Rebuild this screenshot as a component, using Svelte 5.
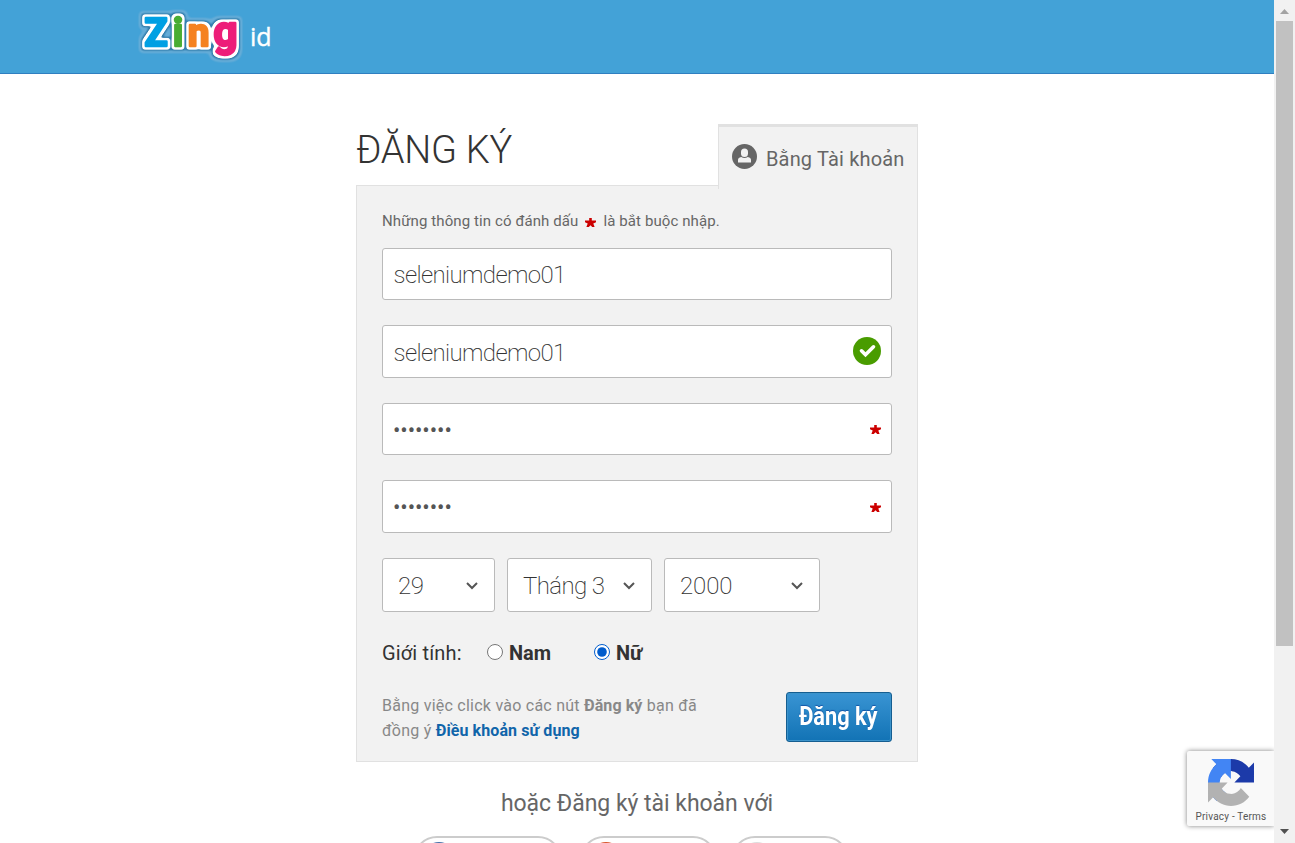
<script>
  let username = $state('seleniumdemo01');
  let gender = $state('nu');
  const dates = [
    { label: '29', width: 113, spacing: -0.4 },
    { label: 'Tháng 3', width: 145, spacing: -0.6 },
    { label: '2000', width: 156, spacing: -0.1 }
  ];
</script>

{#snippet star()}
  <svg class="star" width="11" height="9" viewBox="0 0 11 9"><path d="M4.200 0h2.600v2.400H11v1.800L8.300 5.600 9.600 9H7.200L5.500 7.200 3.800 9H1.400L2.700 5.600 0 4.200V2.400h4.200z" fill="#c00" /></svg>
{/snippet}

<div class="window">
  <div class="page">
    <header>
      <svg class="logo" width="150" height="73" viewBox="0 0 150 73">
        <defs>
          <filter id="halo" filterUnits="userSpaceOnUse" x="0" y="0" width="150" height="73" color-interpolation-filters="sRGB">
            <feMorphology in="SourceAlpha" operator="dilate" radius="5" result="far" />
            <feGaussianBlur in="far" stdDeviation="2" result="farSoft" />
            <feComponentTransfer in="farSoft" result="farEdge"><feFuncA type="linear" slope="3" intercept="-.5" /></feComponentTransfer>
            <feFlood flood-color="#64acd7" />
            <feComposite in2="farEdge" operator="in" result="light" />
            <feMorphology in="SourceAlpha" operator="dilate" radius="3" result="mid" />
            <feGaussianBlur in="mid" stdDeviation="1.8" result="midSoft" />
            <feComponentTransfer in="midSoft" result="midEdge"><feFuncA type="linear" slope="2.2" intercept="-.3" /></feComponentTransfer>
            <feFlood flood-color="#347fae" />
            <feComposite in2="midEdge" operator="in" result="dark" />
            <feMorphology in="SourceAlpha" operator="dilate" radius="2" result="near" />
            <feGaussianBlur in="near" stdDeviation="1.2" result="nearSoft" />
            <feComponentTransfer in="nearSoft" result="nearEdge"><feFuncA type="linear" slope="4" intercept="-1" /></feComponentTransfer>
            <feFlood flood-color="#fff" />
            <feComposite in2="nearEdge" operator="in" result="white" />
            <feMerge>
              <feMergeNode in="light" />
              <feMergeNode in="dark" />
              <feMergeNode in="white" />
              <feMergeNode in="SourceGraphic" />
            </feMerge>
          </filter>
        </defs>
        <g class="zing" filter="url(#halo)">
          <text y="46"><tspan x="12.500" fill="#00a0e3" stroke="#00a0e3">Z</tspan><tspan x="41" fill="#49ad33" stroke="#49ad33">i</tspan><tspan x="56" fill="#f58220" stroke="#f58220">n</tspan><tspan class="g" x="81.500" fill="#ed1e79" stroke="#ed1e79">g</tspan></text>
        </g>
        <text class="id" x="118" y="46">id</text>
      </svg>
    </header>

    <main>
      <div class="top">
        <h1>ĐĂNG KÝ</h1>
        <div class="tab">
          <svg width="25" height="25" viewBox="0 0 25 25"><circle cx="12.500" cy="12.500" r="12.500" fill="#666" /><rect x="9" y="4.500" width="7" height="8.600" rx="3.500" fill="#f2f2f2" /><path d="M6 18.500v-2.700q0-2.200 3.200-2.900 3.300 2.300 6.600 0 3.200.7 3.200 2.900v2.700z" fill="#f2f2f2" /></svg>
          <span>Bằng Tài khoản</span>
        </div>
      </div>
      <form class="panel">
        <p class="note"><span>Những thông tin có đánh dấu</span>{@render star()}<span>là bắt buộc nhập.</span></p>
        <div class="field"><input bind:value={username} /></div>
        <div class="field">
          <input bind:value={username} />
          <svg class="ok" width="28" height="28" viewBox="0 0 28 28"><circle cx="14" cy="14" r="14" fill="#499c00" /><path d="m8.500 13.800 4 4 8-8" fill="none" stroke="#fff" stroke-width="3.600" stroke-linecap="round" /></svg>
        </div>
        <div class="field"><span class="dots">••••••••</span>{@render star()}</div>
        <div class="field"><span class="dots">••••••••</span>{@render star()}</div>
        <div class="dates">
          {#each dates as date}
            <div class="select" style:width="{date.width}px">
              <span style:letter-spacing="{date.spacing}px">{date.label}</span>
              <svg width="12" height="8" viewBox="0 0 12 8"><path d="m1 1 5 5 5-5" fill="none" stroke="#555" stroke-width="2" /></svg>
            </div>
          {/each}
        </div>
        <div class="gender">
          <span class="caption">Giới tính:</span>
          <label class="first"><input type="radio" value="nam" bind:group={gender} /><b>Nam</b></label>
          <label><input type="radio" value="nu" bind:group={gender} /><b>Nữ</b></label>
        </div>
        <div class="submit">
          <p>Bằng việc click vào các nút <b>Đăng ký</b> bạn đã<br />đồng ý <b class="link">Điều khoản sử dụng</b></p>
          <button type="button"><span>Đăng ký</span></button>
        </div>
      </form>
      <p class="or">hoặc Đăng ký tài khoản với</p>
      <div class="socials">
        <div class="pill" style:width="149px"><i style:background="#4470aa"></i></div>
        <div class="pill" style:width="137px"><i style:background="#d9562b"></i></div>
        <div class="pill" style:width="118px"><i style:background="#ddd"></i></div>
      </div>
    </main>

    <aside class="captcha">
      <svg width="46" height="47" viewBox="0 0 64 64" preserveAspectRatio="none">
        <path d="M64 31.955l-.033-1.370V4.687l-7.160 7.160C50.948 4.674 42.033.093 32.050.093c-10.400 0-19.622 4.960-25.458 12.640l11.736 11.860a15.550 15.550 0 0 1 4.754-5.334c2.050-1.600 4.952-2.906 8.968-2.906.485 0 .86.057 1.135.163 4.976.393 9.288 3.140 11.828 7.124l-8.307 8.307L64 31.953" fill="#1c3aa9" />
        <path d="M31.862.094l-1.370.033H4.594l7.160 7.160C4.580 13.147 0 22.060 0 32.046c0 10.400 4.960 19.622 12.640 25.458L24.500 45.768a15.550 15.550 0 0 1-5.334-4.754c-1.600-2.050-2.906-4.952-2.906-8.968 0-.485.057-.86.163-1.135.393-4.976 3.140-9.288 7.124-11.828l8.307 8.307L31.860.095" fill="#4285f4" />
        <path d="M.001 32.045l.033 1.370v25.898l7.160-7.160c5.860 7.173 14.774 11.754 24.760 11.754 10.400 0 19.622-4.960 25.458-12.640l-11.736-11.860a15.550 15.550 0 0 1-4.754 5.334c-2.050 1.600-4.952 2.906-8.968 2.906-.485 0-.86-.057-1.135-.163-4.976-.393-9.288-3.140-11.828-7.124l8.307-8.307L.001 32.045" fill="#b2b2b2" />
      </svg>
      <span>Privacy - Terms</span>
    </aside>
  </div>

  <div class="scrollbar">
    <svg width="9" height="5" viewBox="0 0 9 5"><path d="M0 5 4.500 0 9 5z" fill="#a3a3a3" /></svg>
    <div class="thumb"></div>
    <svg class="down" width="9" height="5" viewBox="0 0 9 5"><path d="M0 0h9L4.500 5z" fill="#505050" /></svg>
  </div>
</div>

<style>
  :global(body) { margin: 0; overflow: hidden; }
  .window { display: flex; width: 1295px; height: 843px; overflow: hidden; font-family: Roboto, sans-serif; color: #666; background: #fff; }
  .window * { box-sizing: border-box; }
  .page { position: relative; width: 1274px; height: 843px; overflow: hidden; }
  p, h1 { margin: 0; }
  header { height: 74px; padding-left: 132px; background: #43a2d7; border-bottom: 1px solid #2f7fc0; }
  .logo { display: block; overflow: visible; }
  .zing { font: 700 38px Roboto, sans-serif; stroke-width: 2.500px; stroke-linejoin: round; }
  .zing .g { font-size: 42px; }
  .id { font: 400 25px "Open Sans", sans-serif; fill: #fff; stroke: #fff; stroke-width: .4px; }
  main { width: 562px; margin-left: 356px; padding-top: 50px; }
  .top { display: flex; justify-content: space-between; height: 61px; }
  h1 { font-size: 38px; line-height: 53px; font-weight: 300; letter-spacing: -.25px; color: #333; }
  .tab { display: flex; align-items: center; gap: 9px; width: 200px; height: 65px; padding: 0 0 0 13px; background: #f2f2f2; border: 1px solid #e1e1e1; border-top-width: 3px; border-bottom: 0; font-size: 20px; line-height: 28px; z-index: 1; }
  .tab svg { margin-bottom: 3px; }
  .tab span { margin-top: 2px; white-space: nowrap; letter-spacing: .16px; }
  .panel { height: 577px; padding: 25px 25px 0; background: #f2f2f2; border: 1px solid #e1e1e1; }
  .note { display: flex; align-items: center; height: 20px; margin-bottom: 16.900px; font-size: 15px; line-height: 20px; letter-spacing: .1px; }
  .note .star { margin: 3px 7px 0; }
  .field { display: flex; align-items: center; justify-content: space-between; width: 510px; height: 52.500px; margin-bottom: 25px; padding: 0 10px; background: #fff; border: 1px solid #bababa; border-radius: 3px; }
  .field .ok { margin-bottom: 1px; }
  .field .star { margin-top: 1px; }
  .field input { width: 400px; height: 40px; margin-top: 2px; padding: 0 0 0 .5px; border: 0; outline: 0; background: none; font: 200 24px Roboto, sans-serif; letter-spacing: -.64px; color: #333; }
  .dots { margin-top: 2px; font-size: 22px; letter-spacing: -.08px; color: #555; }
  .dates { display: flex; gap: 12px; }
  .select { display: flex; align-items: center; justify-content: space-between; height: 54px; padding: 0 16px 0 15px; background: #fff; border: 1px solid #bababa; border-radius: 3px; font-size: 24px; font-weight: 200; color: #333; }
  .select span { margin-top: 2px; }
  .select svg { margin-top: 2px; }
  .gender { display: flex; align-items: center; height: 28px; margin-top: 27px; font-size: 20px; color: #333; }
  .caption { width: 105px; letter-spacing: .15px; }
  .gender label { display: flex; align-items: center; }
  .gender .first { width: 107px; }
  .gender input { width: 16px; height: 16px; margin: 0 6px 2px 0; accent-color: #005ccc; }
  .submit { display: flex; justify-content: space-between; margin-top: 25px; font-size: 16px; line-height: 25px; color: #888; }
  .submit p { padding-top: 1px; letter-spacing: .24px; }
  .submit b { font-weight: 700; letter-spacing: .09px; }
  .submit .link { color: #1065aa; }
  button { width: 106px; height: 50px; padding: 0; border: 1px solid #155e91; border-radius: 3px; background: linear-gradient(#3994d3, #1273b5); box-shadow: inset 0 0 0 1px #3c93ca; color: #fff; font: 700 25px Roboto, sans-serif; text-shadow: 0 -1px 1px #1556a8; }
  button span { display: inline-block; transform: scaleX(.87); margin: 0 -10px 0 -11px; }
  .or { margin-top: 26px; font-size: 23px; line-height: 32px; text-align: center; letter-spacing: -.03px; }
  .socials { display: flex; gap: 17px; margin: 16px 0 0 57px; }
  .pill { flex: none; height: 48px; padding: 4px 0 0 8px; border: 2px solid #ccc; border-radius: 24px; }
  .pill + .pill { margin-left: 1px; }
  .pill + .pill + .pill { margin-left: -3px; }
  .pill i { display: block; width: 32px; height: 32px; border-radius: 50%; }
  .captcha { position: absolute; top: 751px; left: 1187px; display: flex; flex-direction: column; align-items: center; width: 87px; height: 75px; padding: 8px 0 0 1px; background: #f9f9f9; border-radius: 2px 0 0 2px; box-shadow: 0 0 5px #808080; font-size: 10px; line-height: 14px; color: #555; white-space: nowrap; }
  .captcha span { letter-spacing: .2px; margin-top: 4px; }
  .scrollbar { display: flex; flex-direction: column; align-items: center; width: 21px; height: 843px; padding-top: 9px; background: #f1f1f1; }
  .thumb { width: 17px; height: 625px; margin: 7px 0 183px; background: #c1c1c1; }
  .scrollbar svg { flex: none; }
</style>
